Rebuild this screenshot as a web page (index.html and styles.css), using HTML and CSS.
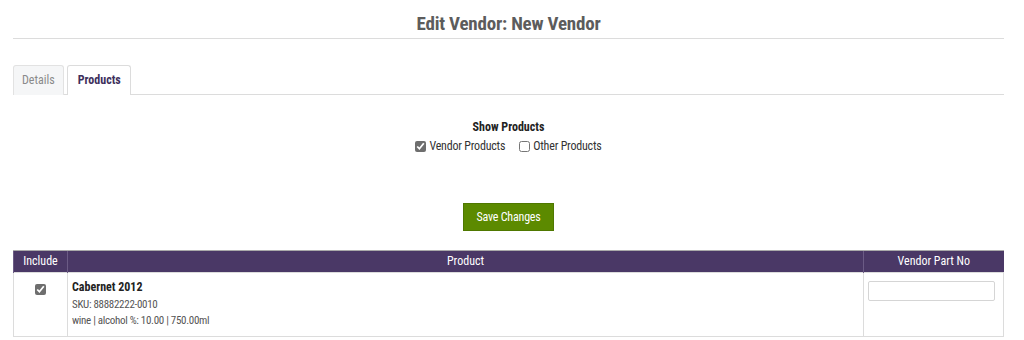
FILE: index.html
```html
<!DOCTYPE html>
<html lang="en">
<head>
    <meta charset="UTF-8">
    <title>Edit Vendor</title>
    <link rel="stylesheet" href="styles.css">
</head>
<body>

<div class="page">
    <h1 class="page-title">Edit Vendor: New Vendor</h1>

    <div class="tabs">
        <div class="tab">Details</div>
        <div class="tab active">Products</div>
    </div>

    <div class="filter">
        <div class="filter-title">Show Products</div>
        <div class="filter-options">
            <label><input type="checkbox" checked> Vendor Products</label>
            <label><input type="checkbox"> Other Products</label>
        </div>
    </div>

    <div class="actions">
        <button class="save-btn">Save Changes</button>
    </div>

    <table class="product-table">
        <thead>
            <tr>
                <th class="col-include">Include</th>
                <th>Product</th>
                <th class="col-part">Vendor Part No</th>
            </tr>
        </thead>
        <tbody>
            <tr>
                <td class="col-include"><input type="checkbox" checked></td>
                <td>
                    <div class="product-name">Cabernet 2012</div>
                    <div class="product-meta">SKU: 88882222-0010</div>
                    <div class="product-meta">wine | alcohol %: 10.00 | 750.00ml</div>
                </td>
                <td class="col-part"><input type="text" class="part-input"></td>
            </tr>
        </tbody>
    </table>
</div>

</body>
</html>
```

FILE: styles.css
```css
body {
    font-family: 'Roboto Condensed', 'DejaVu Sans Condensed', 'Roboto', sans-serif;
    font-stretch: condensed;
    margin: 0;
    color: #222;
    font-size: 12px;
    background: #fff;
}

.page {
    padding: 0 20px 0 13px;
}

.page-title {
    text-align: center;
    font-size: 19px;
    letter-spacing: -0.2px;
    color: #5c5c5c;
    margin: 0;
    padding: 12px 0 3px;
    border-bottom: 1px solid #dcdcdc;
}

/* Tabs */
.tabs {
    display: flex;
    gap: 3px;
    margin-top: 26px;
    border-bottom: 1px solid #dcdcdc;
}

.tab {
    padding: 7px 8px 8px;
    border: 1px solid #e2e2e2;
    border-bottom: none;
    border-radius: 3px 3px 0 0;
    background: #f5f6f7;
    color: #8a8a8a;
    margin-bottom: -1px;
}

.tab.active {
    background: #fff;
    color: #3e2f5c;
    font-weight: bold;
    padding: 7px 9px 8px 10px;
    border-color: #dcdcdc;
}

/* Filter */
.filter {
    text-align: center;
    margin-top: 25px;
}

.filter-title {
    font-weight: bold;
}

.filter-options {
    display: flex;
    justify-content: center;
    gap: 14px;
    margin-top: 5px;
    color: #333;
    letter-spacing: -0.2px;
}

.filter-options label {
    display: flex;
    align-items: center;
    gap: 3px;
}

.filter-options input,
.col-include input {
    margin: 0;
    width: 11px;
    height: 11px;
    accent-color: #6e6e6e;
}

/* Save */
.actions {
    text-align: center;
    margin-top: 50px;
}

.save-btn {
    font-family: inherit;
    font-stretch: condensed;
    font-size: 12px;
    letter-spacing: -0.2px;
    background: #5c8a00;
    color: #fff;
    border: 1px solid #4f7800;
    padding: 6px 12px;
    cursor: pointer;
}

/* Table */
.product-table {
    width: 100%;
    border-collapse: collapse;
    margin-top: 19px;
}

.product-table th {
    background: #4a3866;
    color: #fff;
    font-weight: normal;
    padding: 3px 6px 4px;
    border-left: 1px solid #6b5b85;
    border-top: 1px solid #aaa;
}

.product-table td {
    border: 1px solid #dcdcdc;
    vertical-align: top;
    padding: 7px 4px 7px;
}

.product-table .col-include {
    width: 41px;
    text-align: center;
}

.product-table .col-part {
    width: 127px;
}

.product-table td.col-part {
    padding: 8px 8px 8px 4px;
}

.col-include input {
    margin: 4px 0 0;
}

.product-name {
    font-weight: bold;
    font-size: 12px;
    margin-bottom: 3px;
}

.product-meta {
    font-size: 11px;
    letter-spacing: -0.3px;
    color: #555;
    line-height: 16px;
}

.part-input {
    width: 100%;
    box-sizing: border-box;
    height: 20px;
    border: 1px solid #d5d5d5;
    border-radius: 2px;
}
```
